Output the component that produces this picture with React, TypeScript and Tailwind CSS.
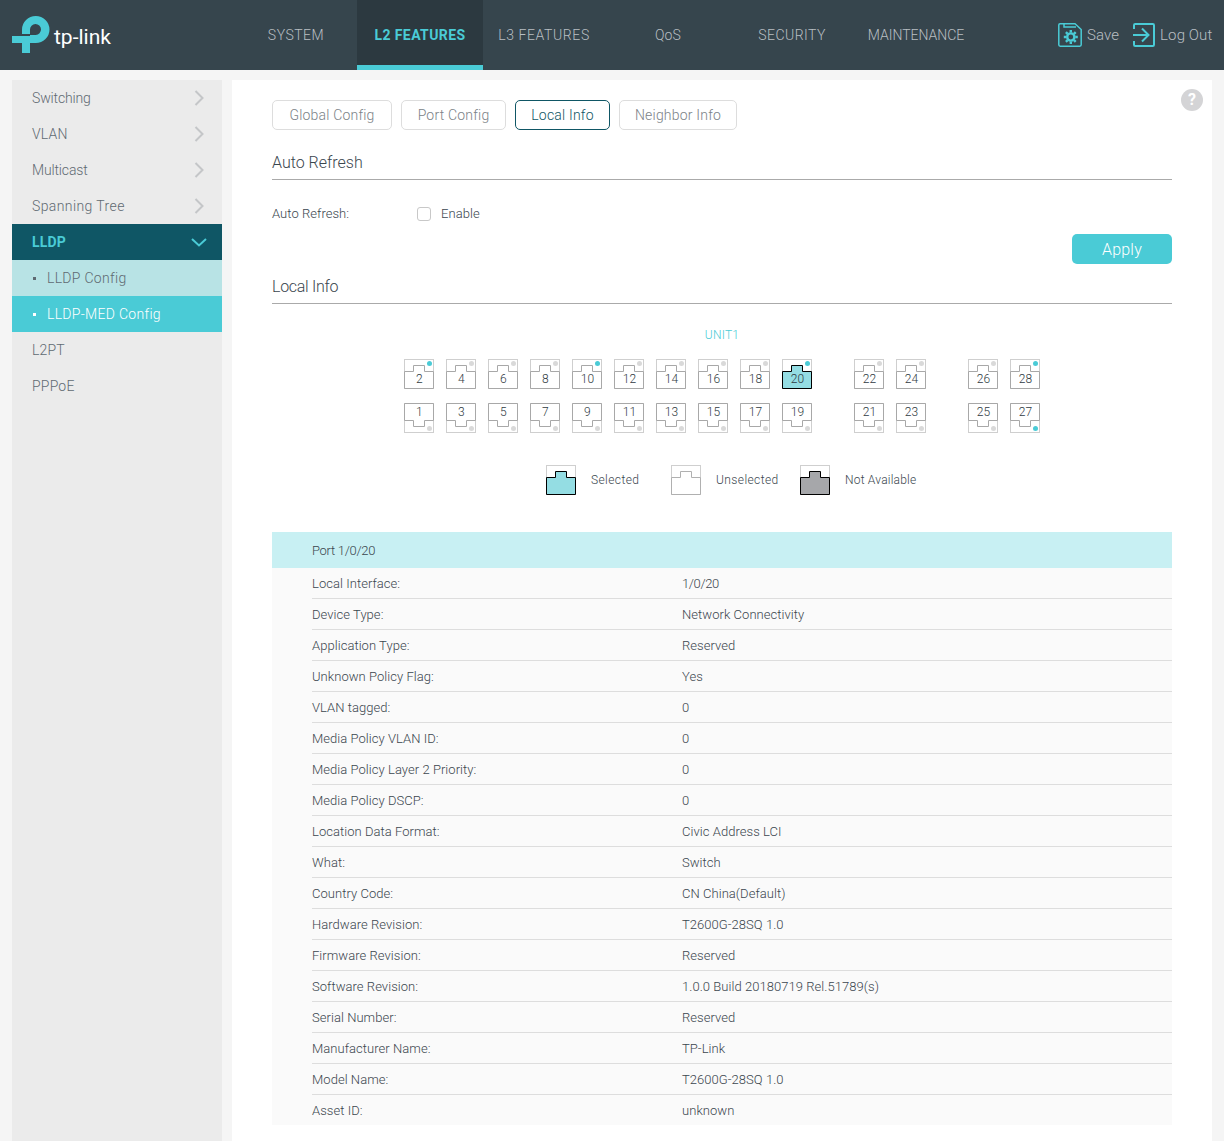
const font = "font-['Roboto','Liberation_Sans',sans-serif] font-light";

function Chevron() {
  return (
    <svg width="10" height="16" viewBox="0 0 10 16" fill="none">
      <path d="M1.5 1L8.5 8L1.5 15" stroke="#c4c6c8" strokeWidth="2" />
    </svg>
  );
}

function ChevronDown() {
  return (
    <svg width="16" height="9" viewBox="0 0 16 9" fill="none">
      <path d="M1 1L8 7.5L15 1" stroke="#4acbd6" strokeWidth="2" />
    </svg>
  );
}

function Logo() {
  return (
    <div className="flex items-end">
      <svg width="38" height="37" viewBox="0 0 38 37" fill="#4acbd6">
        <path d="M10 18V13.5A13.75 13.5 0 0 1 37.5 13.5A13.75 13.5 0 0 1 23.75 27H18V19H23.75A5.5 5.5 0 1 0 18 13.5V18Z" />
        <path d="M0 20H18V37H10V27H0Z" />
      </svg>
      <span className="ml-[4px] mb-[4px] text-[21px] leading-[24px] font-normal tracking-normal text-white font-['Roboto',sans-serif]">tp-link</span>
    </div>
  );
}

function SaveIcon() {
  return (
    <svg width="24" height="24" viewBox="0 0 24 24" fill="none" stroke="#4acbd6" strokeWidth="1.5">
      <path d="M2 0.8H17L23.2 6.5V21.8C23.2 22.6 22.6 23.2 21.8 23.2H2.2C1.4 23.2 0.8 22.6 0.8 21.8V2C0.8 1.3 1.3 0.8 2 0.8Z" />
      <path d="M6 0.8V4H18" />
      <circle cx="12.8" cy="14" r="3.6" strokeWidth="2.4" />
      <path d="M12.8 7V9.5M12.8 18.5V21M5.8 14H8.3M17.3 14H19.8M7.9 9.1L9.6 10.8M16 17.2L17.7 18.9M17.7 9.1L16 10.8M9.6 17.2L7.9 18.9" strokeWidth="2.4" />
    </svg>
  );
}

function LogoutIcon() {
  return (
    <svg width="22" height="24" viewBox="0 0 22 24" fill="none" stroke="#4acbd6" strokeWidth="2">
      <path d="M1 6V2.2C1 1.5 1.5 1 2.2 1H19.8C20.5 1 21 1.5 21 2.2V21.8C21 22.5 20.5 23 19.8 23H2.2C1.5 23 1 22.5 1 21.8V18" />
      <path d="M0 12H15.5M9 5.5L15.5 12L9 18.5" />
    </svg>
  );
}

const navItems: [string, string][] = [
  ["SYSTEM", "tracking-[0.5px]"],
  ["L2 FEATURES", ""],
  ["L3 FEATURES", "tracking-[0.6px]"],
  ["QoS", "tracking-[0.2px]"],
  ["SECURITY", "tracking-[0.45px]"],
  ["MAINTENANCE", "tracking-[0px]"],
];

function Header() {
  return (
    <header className="flex h-[70px] bg-[#36454d] pl-[12px]">
      <div className="w-[222px] pt-[16px]">
        <Logo />
      </div>
      <nav className="flex">
        {navItems.map(([n, t]) =>
          n === "L2 FEATURES" ? (
            <div key={n} className="-mx-[1px] flex h-[70px] w-[126px] items-center justify-center border-b-[5px] border-[#4acbd6] bg-[#2c3940] pt-[5px] text-[14px] font-bold tracking-[0.4px] text-[#4acbd6]">
              {n}
            </div>
          ) : (
            <div key={n} className={`flex h-[70px] w-[124px] items-center justify-center text-[14px] text-[#b9bfc3] ${t}`}>
              {n}
            </div>
          )
        )}
      </nav>
      <div className="ml-[80px] flex items-center gap-[14px] text-[15px] tracking-[0.1px] text-[#b9bfc3]">
        <div className="flex items-center gap-[5px]">
          <SaveIcon />
          <span>Save</span>
        </div>
        <div className="flex items-center gap-[5px]">
          <LogoutIcon />
          <span>Log Out</span>
        </div>
      </div>
    </header>
  );
}

function SideItem({ label, arrow, tracking }: { label: string; arrow?: boolean; tracking: string }) {
  return (
    <div className={`flex h-[36px] items-center justify-between pl-[20px] pr-[18px] text-[14px] text-[#5f6a72] ${tracking}`}>
      <span>{label}</span>
      {arrow && <Chevron />}
    </div>
  );
}

function Sidebar() {
  return (
    <aside className="w-[210px] shrink-0 bg-[#ebebeb]">
      <SideItem label="Switching" arrow tracking="tracking-[-0.15px]" />
      <SideItem label="VLAN" arrow tracking="tracking-[0.2px]" />
      <SideItem label="Multicast" arrow tracking="tracking-[-0.15px]" />
      <SideItem label="Spanning Tree" arrow tracking="tracking-[0.4px]" />
      <div className="flex h-[36px] items-center justify-between bg-[#0f5665] pl-[20px] pr-[15px] text-[14px] font-bold text-[#4acbd6]">
        <span>LLDP</span>
        <ChevronDown />
      </div>
      <div className="flex h-[36px] items-center bg-[#b8e3e5] pl-[21px] text-[14px] tracking-[0.3px] text-[#5f6a72]">
        <span className="mr-[11px] h-[3px] w-[3px] bg-[#5f6a72]" />
        LLDP Config
      </div>
      <div className="flex h-[36px] items-center bg-[#4acbd6] pl-[21px] text-[14px] tracking-[0.3px] text-white">
        <span className="mr-[11px] h-[3px] w-[3px] bg-white" />
        LLDP-MED Config
      </div>
      <SideItem label="L2PT" tracking="tracking-[0.2px]" />
      <SideItem label="PPPoE" tracking="tracking-[0.2px]" />
    </aside>
  );
}

function Tab({ label, width, active }: { label: string; width: string; active?: boolean }) {
  return (
    <div
      className={
        active
          ? `flex h-[30px] items-center justify-center rounded-[5px] border border-[#0f5665] text-[14px] text-[#0f5665] ${width}`
          : `flex h-[30px] items-center justify-center rounded-[5px] border border-[#dddddd] text-[14px] text-[#7b8287] ${width}`
      }
    >
      {label}
    </div>
  );
}

function Section({ title, tracking }: { title: string; tracking: string }) {
  return <div className={`h-[26px] border-b border-[#aaaaaa] text-[16px] leading-[18px] text-[#3a464e] ${tracking}`}>{title}</div>;
}

type PortProps = { n: number; dot?: boolean; selected?: boolean };

function Port({ n, dot, selected, bottom }: PortProps & { bottom?: boolean }) {
  const shape = bottom
    ? "M0.5 0.5H29.5V17.5H20.5V23.5H9.5V17.5H0.5Z"
    : "M0.5 12.5H9.5V6.5H20.5V12.5H29.5V29.5H0.5Z";
  return (
    <div className="relative h-[30px] w-[30px]">
      <svg width="30" height="30" viewBox="0 0 30 30" className="block">
        <rect x="0.5" y="0.5" width="29" height="29" fill="#fff" stroke="#cfcfcf" />
        <path d={shape} fill={selected ? "#94dde3" : "#fff"} stroke={selected ? "#000" : "#a8a8a8"} />
        <circle cx="25.5" cy={bottom ? 25.5 : 4.5} r="2.5" fill={dot ? "#4acbd6" : "#d9d9d9"} />
      </svg>
      <span className={bottom ? "absolute inset-x-0 top-[1px] pl-[1px] text-center text-[12px] leading-[16px] text-[#2f3a42]" : "absolute inset-x-0 top-[12px] pl-[1px] text-center text-[12px] leading-[16px] text-[#2f3a42]"}>
        {n}
      </span>
    </div>
  );
}

function PortGroup({ ports, bottom }: { ports: PortProps[]; bottom?: boolean }) {
  return (
    <div className="flex gap-[12px]">
      {ports.map((p) => (
        <Port key={p.n} {...p} bottom={bottom} />
      ))}
    </div>
  );
}

function PortRow({ groups, bottom }: { groups: PortProps[][]; bottom?: boolean }) {
  return (
    <div className="flex justify-center gap-[42px]">
      {groups.map((g, i) => (
        <PortGroup key={i} ports={g} bottom={bottom} />
      ))}
    </div>
  );
}

const topGroups: PortProps[][] = [
  [{ n: 2, dot: true }, { n: 4 }, { n: 6 }, { n: 8 }, { n: 10, dot: true }, { n: 12 }, { n: 14 }, { n: 16 }, { n: 18 }, { n: 20, dot: true, selected: true }],
  [{ n: 22 }, { n: 24 }],
  [{ n: 26 }, { n: 28, dot: true }],
];
const bottomGroups: PortProps[][] = [
  [{ n: 1 }, { n: 3 }, { n: 5 }, { n: 7 }, { n: 9 }, { n: 11 }, { n: 13 }, { n: 15 }, { n: 17 }, { n: 19 }],
  [{ n: 21 }, { n: 23 }],
  [{ n: 25 }, { n: 27, dot: true }],
];

function LegendIcon({ fill, stroke }: { fill: string; stroke: string }) {
  return (
    <svg width="30" height="30" viewBox="0 0 30 30">
      <rect x="0.5" y="0.5" width="29" height="29" fill="#fff" stroke="#cfcfcf" />
      <path d="M0.5 12.5H9.5V6.5H20.5V12.5H29.5V29.5H0.5Z" fill={fill} stroke={stroke} />
    </svg>
  );
}

const rows: [string, string][] = [
  ["Local Interface:", "1/0/20"],
  ["Device Type:", "Network Connectivity"],
  ["Application Type:", "Reserved"],
  ["Unknown Policy Flag:", "Yes"],
  ["VLAN tagged:", "0"],
  ["Media Policy VLAN ID:", "0"],
  ["Media Policy Layer 2 Priority:", "0"],
  ["Media Policy DSCP:", "0"],
  ["Location Data Format:", "Civic Address LCI"],
  ["What:", "Switch"],
  ["Country Code:", "CN China(Default)"],
  ["Hardware Revision:", "T2600G-28SQ 1.0"],
  ["Firmware Revision:", "Reserved"],
  ["Software Revision:", "1.0.0 Build 20180719 Rel.51789(s)"],
  ["Serial Number:", "Reserved"],
  ["Manufacturer Name:", "TP-Link"],
  ["Model Name:", "T2600G-28SQ 1.0"],
  ["Asset ID:", "unknown"],
];

function Main() {
  return (
    <main className="relative flex-1 bg-white px-[40px] pt-[20px] pb-[16px]">
      <div className="absolute right-[9px] top-[9px] flex h-[22px] w-[22px] items-center justify-center rounded-full bg-[#d4d4d6] text-[16px] font-bold text-white">
        ?
      </div>
      <div className="flex gap-[9px]">
        <Tab label="Global Config" width="w-[120px]" />
        <Tab label="Port Config" width="w-[105px]" />
        <Tab label="Local Info" width="w-[95px]" active />
        <Tab label="Neighbor Info" width="w-[118px]" />
      </div>
      <div className="mt-[24px]">
        <Section title="Auto Refresh" tracking="tracking-[0px]" />
      </div>
      <div className="mt-[26px] flex h-[16px] items-center text-[13px] tracking-[0.05px] text-[#3a464e]">
        <span className="w-[145px]">Auto Refresh:</span>
        <span className="h-[14px] w-[14px] rounded-[3px] border border-[#c8c8c8] bg-white" />
        <span className="ml-[10px]">Enable</span>
      </div>
      <div className="mt-[12px] flex justify-end">
        <div className="flex h-[30px] w-[100px] items-center justify-center rounded-[5px] bg-[#4acbd6] pt-[1px] text-[16px] text-white">Apply</div>
      </div>
      <div className="mt-[14px]">
        <Section title="Local Info" tracking="tracking-[-0.3px]" />
      </div>
      <div className="mt-[23px] text-center text-[12px] leading-[16px] text-[#4acbd6]">UNIT1</div>
      <div className="mt-[16px] flex flex-col gap-[14px]">
        <PortRow groups={topGroups} />
        <PortRow groups={bottomGroups} bottom />
      </div>
      <div className="mt-[32px] flex h-[30px] items-center pl-[274px] text-[12px] text-[#3a464e]">
        <LegendIcon fill="#94dde3" stroke="#000" />
        <span className="ml-[15px] w-[80px] tracking-[0.4px]">Selected</span>
        <LegendIcon fill="#fff" stroke="#b0b0b0" />
        <span className="ml-[15px] w-[84px] tracking-[0.4px]">Unselected</span>
        <LegendIcon fill="#a6a7aa" stroke="#000" />
        <span className="ml-[15px]">Not Available</span>
      </div>
      <div className="mt-[37px]">
        <div className="flex h-[36px] items-center bg-[#c8f0f3] pl-[40px] pt-[1px] text-[13px] tracking-[-0.3px] text-[#3a464e]">Port 1/0/20</div>
        <div className="bg-[#fafafa] pl-[40px] text-[13px] tracking-[0.05px] text-[#3a464e]">
          {rows.map(([k, v], i) => (
            <div key={k} className={i === rows.length - 1 ? "flex h-[30px] items-center pt-[1px]" : "flex h-[31px] items-center border-b border-[#dddddd] pt-[1px]"}>
              <span className="w-[370px]">{k}</span>
              <span className={i === 0 ? "tracking-[-0.4px]" : ""}>{v}</span>
            </div>
          ))}
        </div>
      </div>
    </main>
  );
}

export default function App() {
  return (
    <div className={`h-[1141px] overflow-hidden bg-[#f5f5f5] tracking-[0.2px] ${font}`}>
      <Header />
      <div className="flex h-[1071px] gap-[10px] px-[12px] pt-[10px]">
        <Sidebar />
        <Main />
      </div>
    </div>
  );
}
